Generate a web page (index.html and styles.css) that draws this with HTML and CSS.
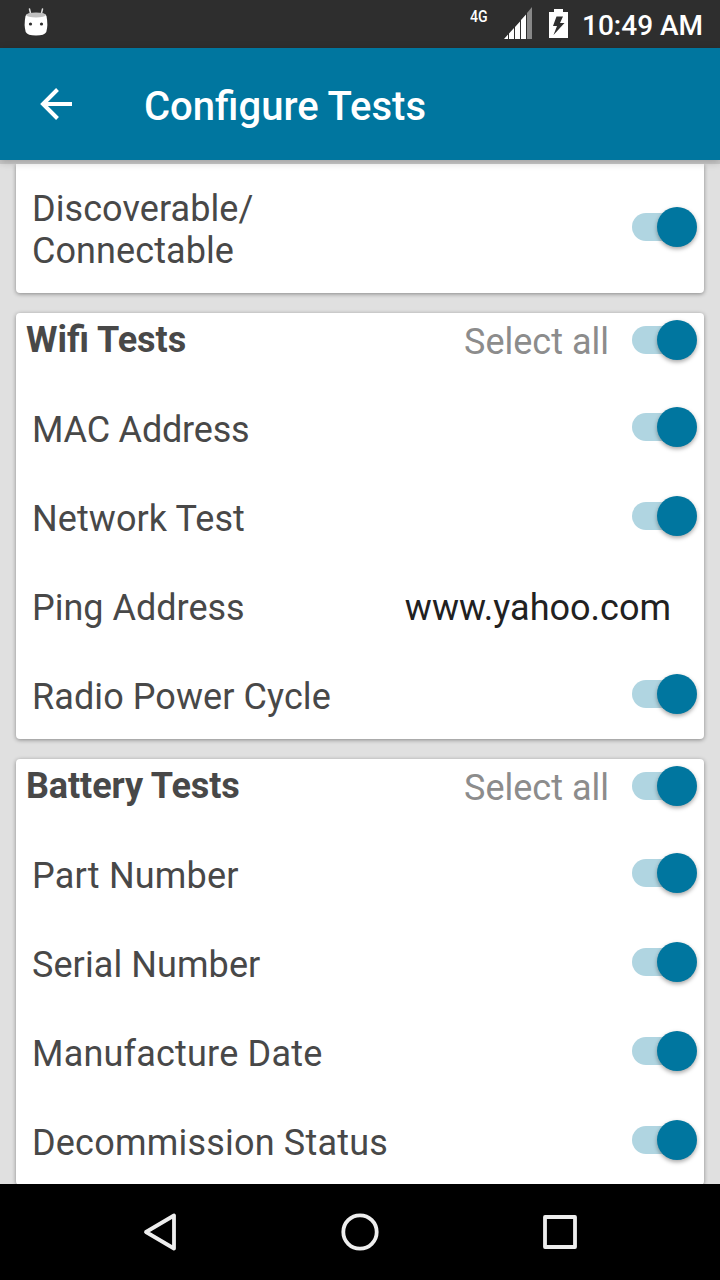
FILE: index.html
```html
<!DOCTYPE html>
<html lang="en">
<head>
<meta charset="utf-8">
<title>Configure Tests</title>
<link rel="stylesheet" href="styles.css">
</head>
<body>
<div class="screen">
  <header class="status">
    <svg class="droid" width="28" height="30" viewBox="0 0 28 30">
      <path d="M7.500 1L8.700 6M20.500 1L19.300 6" stroke="#ddd" stroke-width="1.500" stroke-linecap="round"/>
      <path d="M3.500 8Q4 5 14 5T24.500 8Q26.300 17 24.300 24Q22.500 27.500 14 27.500T3.700 24Q1.700 17 3.500 8Z" fill="#fff"/>
      <ellipse cx="14" cy="7" rx="9.800" ry="2.400" fill="#c0c0c0"/>
      <circle cx="8.500" cy="16" r="1.600" fill="#2e2e2e"/><circle cx="19.500" cy="16" r="1.600" fill="#2e2e2e"/>
    </svg>
    <span class="network">4G</span>
    <svg class="signal" width="29" height="32" viewBox="0 0 29 32">
      <path d="M23 6L28 0V32H23Z" fill="#888"/>
      <path d="M0 32L4 27.500V32ZM5 26.500L10 21V32H5ZM11 20L16 14.500V32H11ZM17 13L22 7.500V32H17Z" fill="#fff"/>
    </svg>
    <svg class="battery" width="20" height="30" viewBox="0 0 20 30">
      <path d="M5 0H14V3H19V29H0V3H5Z" fill="#fff"/>
      <path d="M7.500 7.500H14L11 14H15.500L4.500 26L8 17H4Z" fill="#2e2e2e"/>
    </svg>
    <span class="time">10:49 AM</span>
  </header>
  <div class="toolbar">
    <svg class="back" width="34" height="34" viewBox="0 0 34 34">
      <path d="M18.500 2.500L4 17L18.500 31.500M4 17H33" fill="none" stroke="#fff" stroke-width="4"/>
    </svg>
    <h1 class="title">Configure Tests</h1>
  </div>
  <main class="content">
    <section class="card card-first">
      <div class="row row-tall"><span class="label">Discoverable/<br>Connectable</span><i class="switch"></i></div>
    </section>
    <section class="card">
      <div class="head"><h2 class="name">Wifi Tests</h2><span class="all">Select all</span><i class="switch"></i></div>
      <div class="row"><span class="label label-caps">MAC Address</span><i class="switch"></i></div>
      <div class="row"><span class="label">Network Test</span><i class="switch"></i></div>
      <div class="row"><span class="label label-plain">Ping Address</span><span class="value">www.yahoo.com</span></div>
      <div class="row"><span class="label">Radio Power Cycle</span><i class="switch"></i></div>
    </section>
    <section class="card">
      <div class="head"><h2 class="name name-tight">Battery Tests</h2><span class="all">Select all</span><i class="switch"></i></div>
      <div class="row"><span class="label label-wide">Part Number</span><i class="switch"></i></div>
      <div class="row"><span class="label">Serial Number</span><i class="switch"></i></div>
      <div class="row"><span class="label label-wide">Manufacture Date</span><i class="switch"></i></div>
      <div class="row"><span class="label label-wide">Decommission Status</span><i class="switch"></i></div>
    </section>
  </main>
  <nav class="nav">
    <svg width="40" height="40" viewBox="0 0 40 40"><path d="M6 20L34 3.500V36.500Z" class="outline"/></svg>
    <svg width="40" height="40" viewBox="0 0 40 40"><circle cx="20" cy="20" r="16.700" class="outline"/></svg>
    <svg width="40" height="40" viewBox="0 0 40 40"><rect x="5" y="5" width="30" height="30" class="outline"/></svg>
  </nav>
</div>
</body>
</html>
```
FILE: styles.css
```css
* { box-sizing: border-box; }
body { margin: 0; font-family: Roboto, sans-serif; }
.screen { width: 720px; height: 1280px; display: flex; flex-direction: column; overflow: hidden; background: #e0e0e0; }
.status { height: 48px; flex: none; display: flex; align-items: flex-start; background: #2e2e2e; color: #fff; padding-left: 22px; }
.droid { margin-top: 8px; }
.network { margin: 7px 0 0 420px; width: 34px; font-size: 17px; line-height: 18px; font-weight: 500; transform: scaleX(.83); transform-origin: left; }
.signal { margin-top: 7px; }
.battery { margin: 9px 0 0 16px; }
.time { margin: 9px 0 0 13px; font-size: 28px; line-height: 34px; font-weight: 500; white-space: nowrap; }
.toolbar { height: 112px; flex: none; display: flex; align-items: center; padding: 0 0 0 39px; background: #00769f; box-shadow: 0 2px 8px rgba(0,0,0,.22); z-index: 1; }
.title { margin: 6px 0 0 71px; color: #fff; font-size: 40px; line-height: 48px; font-weight: 500; }
.content { flex: 1; min-height: 0; overflow: hidden; padding: 0 16px; border-top: 4px solid #cacaca; display: flex; flex-direction: column; gap: 20px; }
.card { flex: none; background: #fff; border-radius: 4px; box-shadow: 0 1px 4px rgba(0,0,0,.4); }
.card-first { border-radius: 0 0 4px 4px; }
.head { height: 70px; padding: 0 7px 16px 10px; display: flex; align-items: center; }
.name { margin: 0; flex: 1; font-size: 36px; line-height: 42px; font-weight: 700; color: #484848; }
.name-tight { letter-spacing: -.1px; }
.all { margin: 4px 23px 0 0; font-size: 36px; line-height: 42px; color: #8c8c8c; }
.row { height: 89px; padding: 0 7px 1px 16px; display: flex; align-items: center; justify-content: space-between; }
.row-tall { height: 129px; padding-bottom: 3px; }
.label { margin-top: 6px; font-size: 36px; line-height: 42px; letter-spacing: .08px; color: #484848; }
.row-tall .label { margin-top: 6px; }
.label-plain { letter-spacing: 0; }
.label-caps { letter-spacing: -.2px; }
.label-wide { letter-spacing: .2px; }
.value { margin: 6px 26px 0 0; font-size: 36px; line-height: 42px; color: #212121; }
.switch { flex: none; display: grid; align-items: center; width: 65px; height: 40px; }
.switch::before, .switch::after { content: ""; grid-area: 1 / 1; }
.switch::before { width: 56px; height: 28px; border-radius: 14px; background: #b0d5e1; }
.switch::after { justify-self: end; width: 40px; height: 40px; border-radius: 50%; background: #00769f; box-shadow: 0 2px 4px rgba(0,0,0,.35); }
.nav { height: 96px; flex: none; display: flex; align-items: center; justify-content: center; gap: 160px; background: #000; z-index: 1; }
.outline { fill: none; stroke: #eee; stroke-width: 3.8; stroke-linejoin: round; }
```
